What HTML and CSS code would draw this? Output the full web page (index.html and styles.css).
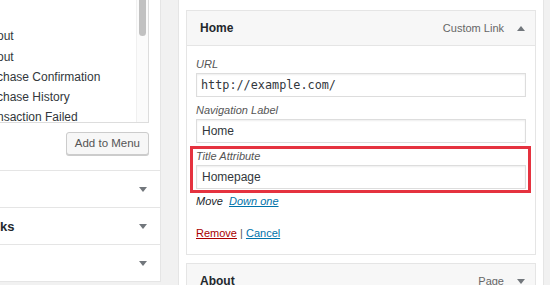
FILE: index.html
```html
<!DOCTYPE html>
<html lang="en">
<head>
    <meta charset="UTF-8">
    <meta name="viewport" content="width=device-width, initial-scale=1.0">
    <title>Menus</title>
<link rel="stylesheet" href="styles.css">
</head>
<body>
  <div class="page">
    <!-- left: add menu items -->
    <div class="side">
      <div class="pages_body">
        <div class="checklist">
          <ul>
            <li>&nbsp;</li>
            <li>out</li>
            <li>out</li>
            <li>chase Confirmation</li>
            <li>chase History</li>
            <li>nsaction Failed</li>
          </ul>
          <div class="track"><div class="thumb"></div></div>
        </div>
        <div class="actions">
          <span class="button">Add to Menu</span>
        </div>
      </div>
      <div class="section"><span class="section_title"></span><span class="arrow down"></span></div>
      <div class="section"><span class="section_title">ks</span><span class="arrow down"></span></div>
      <div class="section last"><span class="section_title"></span><span class="arrow down"></span></div>
    </div>

    <!-- right: menu structure -->
    <div class="menu">
      <div class="item">
        <div class="item_bar">
          <span class="item_title">Home</span>
          <span class="item_type">Custom Link</span>
          <span class="arrow up"></span>
        </div>
        <div class="item_settings">
          <div class="field">
            <label for="url">URL</label>
            <input type="text" id="url" class="mono" value="http://example.com/">
          </div>
          <div class="field">
            <label for="nav_label">Navigation Label</label>
            <input type="text" id="nav_label" value="Home">
          </div>
          <div class="field marked">
            <label for="title_attr">Title Attribute</label>
            <input type="text" id="title_attr" value="Homepage">
          </div>
          <p class="move">Move <a href="#down">Down one</a></p>
          <p class="item_actions"><a href="#remove" class="remove">Remove</a> | <a href="#cancel">Cancel</a></p>
        </div>
      </div>
      <div class="item">
        <div class="item_bar">
          <span class="item_title">About</span>
          <span class="item_type">Page</span>
          <span class="arrow down"></span>
        </div>
      </div>
    </div>
  </div>
</body>
</html>
```

FILE: styles.css
```css
body {
  margin: 0;
  background: #f1f1f1;
  font-family: "Liberation Sans", Arial, sans-serif;
  color: #23282d;
  overflow: hidden;
}
.page {
  display: flex;
  align-items: flex-start;
  gap: 17px;
  height: 285px;
}
/* left column */
.side {
  width: 160px;
  background: #fff;
  border-right: 1px solid #e5e5e5;
  border-bottom: 1px solid #e5e5e5;
}
.pages_body {
  padding-right: 11px;
}
.checklist {
  display: flex;
  height: 122px;
  border-right: 1px solid #ddd;
  border-bottom: 1px solid #ddd;
  overflow: hidden;
}
.checklist ul {
  flex: 1;
  list-style: none;
  margin: 0;
  padding: 6px 0 0;
  font-size: 12px;
  line-height: 20.3px;
  color: #32373c;
  white-space: nowrap;
  overflow: hidden;
}
.checklist li {
  text-indent: -3px;
}
.track {
  width: 11px;
  border-left: 1px solid #f0f0f0;
  background: #fbfbfb;
}
.thumb {
  width: 7px;
  height: 40px;
  margin: -4px 0 0 2px;
  background: #c1c1c1;
  border-radius: 4px;
}
.actions {
  display: flex;
  justify-content: flex-end;
  padding: 9px 0 15px;
}
.button {
  display: inline-block;
  box-sizing: border-box;
  height: 23px;
  padding: 0 8px;
  line-height: 21px;
  font-size: 11.5px;
  color: #555;
  background: #f7f7f7;
  border: 1px solid #ccc;
  border-radius: 3px;
  box-shadow: 0 1px 0 #ccc;
}
.section {
  display: flex;
  align-items: center;
  justify-content: space-between;
  height: 36px;
  border-top: 1px solid #e5e5e5;
  padding-right: 13px;
}
.section_title {
  font-size: 13px;
  font-weight: bold;
  color: #23282d;
}
.arrow {
  display: inline-block;
  width: 0;
  height: 0;
  border-left: 4px solid transparent;
  border-right: 4px solid transparent;
}
.arrow.down {
  border-top: 5px solid #72777c;
}
.arrow.up {
  border-bottom: 5px solid #72777c;
}
/* right column */
.menu {
  width: 366px;
  height: 285px;
  box-sizing: border-box;
  background: #fff;
  border-left: 1px solid #e5e5e5;
  border-right: 1px solid #e5e5e5;
  padding: 10px 7px 0;
}
.item_bar {
  display: flex;
  align-items: center;
  height: 34px;
  padding: 0 10px 0 13px;
  background: #f7f7f7;
  border: 1px solid #e5e5e5;
}
.item_title {
  flex: 1;
  font-size: 12px;
  font-weight: bold;
  color: #23282d;
}
.item_type {
  font-size: 11px;
  color: #666;
  margin-right: 13px;
}
.item_settings {
  padding: 10px 9px 13px;
  border: 1px solid #e5e5e5;
  border-top: none;
  margin-bottom: 8px;
}
.field {
  margin-bottom: 5px;
}
.field label {
  display: block;
  font-size: 11px;
  font-style: italic;
  line-height: 16px;
  color: #555;
}
.field input {
  display: block;
  box-sizing: border-box;
  width: 100%;
  height: 24px;
  margin: 1px 0 0;
  padding: 0 5px;
  font-family: "Liberation Sans", Arial, sans-serif;
  font-size: 12px;
  color: #32373c;
  border: 1px solid #ddd;
  box-shadow: inset 0 1px 2px rgba(0, 0, 0, 0.07);
  outline: none;
}
.field input.mono {
  font-family: "DejaVu Sans Mono", "Liberation Mono", monospace;
  font-size: 11.8px;
  padding-left: 4px;
}
.field.marked {
  position: relative;
  margin-bottom: 0;
}
.field.marked::after {
  content: "";
  position: absolute;
  top: -2px;
  bottom: -4px;
  left: -6px;
  right: -5px;
  border: 3px solid #e5323f;
}
.move {
  margin: 4px 0 0;
  font-size: 11px;
  font-style: italic;
  line-height: 16px;
  color: #23282d;
}
.move a {
  margin-left: 3px;
  color: #0073aa;
}
.item_actions {
  margin: 16px 0 0;
  font-size: 11px;
  line-height: 16px;
  color: #555;
}
.item_actions a {
  color: #0073aa;
}
.item_actions a.remove {
  color: #a00;
}
```
